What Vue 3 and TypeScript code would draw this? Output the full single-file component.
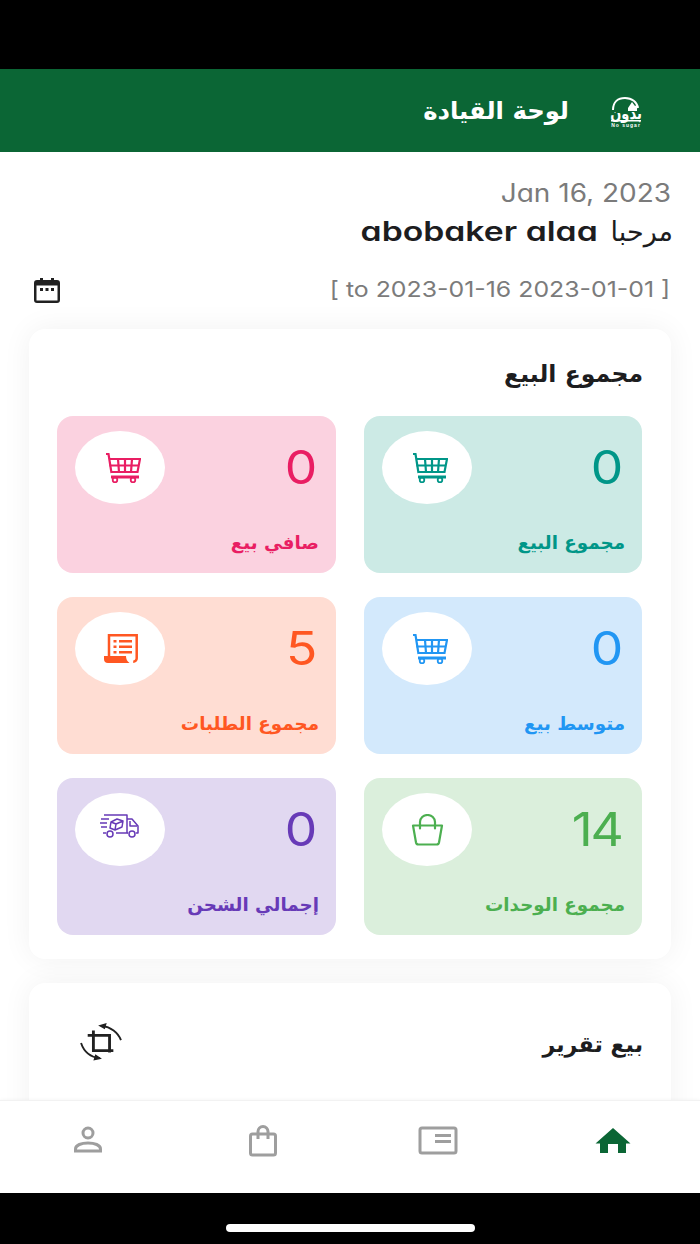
<script setup lang="ts">
interface Tile { label: string; value: string; color: string; bg: string; icon: string }
const tiles: Tile[] = [
  { label: 'مجموع البيع', value: '0', color: '#009688', bg: '#cceae5', icon: 'cart' },
  { label: 'صافي بيع', value: '0', color: '#e91e63', bg: '#fbd2e0', icon: 'cart' },
  { label: 'متوسط بيع', value: '0', color: '#2196f3', bg: '#d3e9fc', icon: 'cart' },
  { label: 'مجموع الطلبات', value: '5', color: '#ff5722', bg: '#ffddd3', icon: 'list' },
  { label: 'مجموع الوحدات', value: '14', color: '#4caf50', bg: '#dbefdc', icon: 'bag' },
  { label: 'إجمالي الشحن', value: '0', color: '#673ab7', bg: '#e1d8f1', icon: 'truck' },
]
</script>

<template>
  <div class="screen">
    <div class="status"></div>
    <header class="bar">
      <svg class="logo" viewBox="0 0 36 32" aria-hidden="true">
        <path d="M5 14C5 6 10 2 17 2s12 4 13 10" fill="none" stroke="#fff" stroke-width="2" />
        <path d="M20 12l4-6 3 4 2-1v6h-9z" fill="#fff" />
        <text transform="translate(18 23) scale(1 1.300)" text-anchor="middle" font-size="13" font-weight="700" fill="#fff" class="logo-ar">بدون</text>
        <rect x="3" y="24" width="30" height="1.500" fill="#fff" />
        <text x="18" y="31" text-anchor="middle" font-size="5" font-weight="700" letter-spacing="1" fill="#fff" class="logo-en">No sugar</text>
      </svg>
      <h1 class="bar-title">لوحة القيادة</h1>
    </header>

    <main class="content">
      <div class="date"><span class="wide-date">Jan 16, 2023</span></div>
      <div class="hello"><span class="hello-ar">مرحبا</span><span class="name">abobaker alaa</span></div>
      <div class="range-row">
        <svg class="cal" viewBox="0 0 28 28" aria-hidden="true">
          <path d="M7 3h3v2h8V3h3v2h3a3 3 0 0 1 3 3v17a3 3 0 0 1-3 3H4a3 3 0 0 1-3-3V8a3 3 0 0 1 3-3h3z" fill="#212121" />
          <rect x="3.500" y="10.500" width="21" height="15" fill="#fff" />
          <rect x="7" y="13" width="3" height="3" fill="#212121" />
          <rect x="12.500" y="13" width="3" height="3" fill="#212121" />
          <rect x="18" y="13" width="3" height="3" fill="#212121" />
        </svg>
        <span class="range">[ to 2023-01-16 2023-01-01 ]</span>
      </div>

      <section class="card summary">
        <h2 class="card-title">مجموع البيع</h2>
        <div class="grid">
          <div v-for="t in tiles" :key="t.label" class="tile" :style="{ background: t.bg, color: t.color }">
            <div class="tile-top">
              <span class="value">{{ t.value }}</span>
              <span class="disc">
                <svg v-if="t.icon === 'cart'" class="ico cart" viewBox="0 0 36 30" aria-hidden="true">
                  <g fill="none" stroke="currentColor">
                    <path d="M1 1l2.500 0 3 19" stroke-width="2.200" />
                    <path d="M4 6h31l-2.500 13H6.500" stroke-width="2.200" />
                    <path d="M4.500 12.500h29.500M13 6l1 13M20 6v13M27 6l-1 13" stroke-width="2.200" />
                    <path d="M6 24h28" stroke-width="3" />
                    <circle cx="10" cy="27" r="2.300" stroke-width="1.800" />
                    <circle cx="28" cy="27" r="2.300" stroke-width="1.800" />
                  </g>
                </svg>
                <svg v-else-if="t.icon === 'list'" class="ico list" viewBox="0 0 34 29" aria-hidden="true">
                  <path d="M5 23V1.300h27.700V24a3.500 3.500 0 0 1-3.500 3.700" fill="none" stroke="currentColor" stroke-width="2.500" />
                  <path d="M0 22h22c0 3 1 5 3.500 7H4a4 4 0 0 1-4-4z" fill="currentColor" />
                  <path d="M9.500 6h3v2.600h-3zM9.500 11.500h3v2.600h-3zM9.500 17h3v2.600h-3zM15 6h13v2.600H15zM15 11.500h13v2.600H15zM15 17h13v2.600H15z" fill="currentColor" />
                </svg>
                <svg v-else-if="t.icon === 'bag'" class="ico bag" viewBox="0 0 33 32" aria-hidden="true">
                  <g fill="none" stroke="currentColor" stroke-width="2.200">
                    <path d="M2 11.500h29l-3 17a2.500 2.500 0 0 1-2.500 2H7.500a2.500 2.500 0 0 1-2.500-2z" stroke-linejoin="round" />
                    <path d="M9 14.500V8a7.500 7 0 0 1 15 0v6.500" stroke-linecap="round" />
                  </g>
                </svg>
                <svg v-else class="ico truck" viewBox="0 0 40 24" aria-hidden="true">
                  <g fill="none" stroke="currentColor" stroke-width="1.500" stroke-linejoin="round">
                    <path d="M4 1h23v18H16M6 19H3" />
                    <path d="M27 5h5l6 7v7h-2M27 19h1" />
                    <path d="M30 7v5h7" />
                    <path d="M11 8l6-3 6 2-1 6-7 3-5-2z M11 8l5 2 7-3M16 10l-1 6" />
                    <path d="M1 5h8M0 9h7M1 13h6" />
                    <circle cx="10" cy="20" r="3" />
                    <circle cx="32" cy="20" r="3" />
                  </g>
                </svg>
              </span>
            </div>
            <div class="tile-label">{{ t.label }}</div>
          </div>
        </div>
      </section>

      <section class="card report">
        <h2 class="report-title">بيع تقرير</h2>
        <svg class="rotate" viewBox="0 0 46 40" aria-hidden="true">
          <g fill="none" stroke="#212121" stroke-width="3">
            <path d="M9 13h23v18" />
            <path d="M15 8v21h21" />
            <path d="M24 3c9 1 17 7 20 15" stroke-width="2" />
            <path d="M22 37C12 36 5 30 2 21" stroke-width="2" />
          </g>
          <path d="M20 2.500L29 0l-2 6.500zM24 37.500l-9 2 2-6.500z" fill="#212121" />
        </svg>
      </section>
    </main>

    <nav class="tabs">
      <svg class="tab" viewBox="0 0 32 32" aria-hidden="true">
        <g fill="none" stroke="#9e9e9e" stroke-width="3">
          <circle cx="16" cy="8" r="5" />
          <path d="M3.500 26v-2c0-4 6-6 12.500-6s12.500 2 12.500 6v2z" />
        </g>
      </svg>
      <svg class="tab" viewBox="0 0 32 32" aria-hidden="true">
        <g fill="none" stroke="#9e9e9e" stroke-width="3">
          <rect x="3.500" y="9" width="25" height="21" rx="2" />
          <path d="M11 14V6.500a5 5 0 0 1 10 0V14" />
        </g>
      </svg>
      <svg class="tab wide" viewBox="0 0 40 32" aria-hidden="true">
        <rect x="2" y="3" width="36" height="25" rx="2" fill="none" stroke="#9e9e9e" stroke-width="3" />
        <path d="M17 9h16v3H17zM17 15h16v3H17z" fill="#9e9e9e" />
      </svg>
      <svg class="tab home" viewBox="0 0 36 32" aria-hidden="true">
        <path d="M18 3L.5 18.500h4.500V28h8v-9h10v9h8v-9.500h4.500z" fill="#0b6635" />
      </svg>
    </nav>

    <footer class="home-area"><span class="indicator"></span></footer>
  </div>
</template>

<style>
html, body { margin: 0; background: #000; }
</style>

<style scoped>
.screen {
  width: 700px;
  height: 1244px;
  display: flex;
  flex-direction: column;
  background: #000;
  overflow: hidden;
  font-family: Inter, "DejaVu Sans", sans-serif;
  font-feature-settings: "cv11";
}
.status { height: 69px; flex: none; }
.bar {
  height: 83px;
  flex: none;
  box-sizing: border-box;
  background: #0b6635;
  display: flex;
  direction: rtl;
  align-items: center;
  padding-right: 56px;
  gap: 41px;
}
.logo { width: 36px; height: 32px; margin-top: 3px; overflow: visible; }
.logo-ar { font-family: "DejaVu Sans", sans-serif; }
.logo-en { font-family: "Liberation Sans", sans-serif; }
.bar-title {
  margin: 0 -2px 0 0;
  color: #fff;
  font-size: 24.300px;
  font-weight: 700;
  font-family: "DejaVu Sans", sans-serif;
}
.content {
  flex: 1;
  min-height: 0;
  overflow: hidden;
  background: #fff;
  padding: 24px 29px 0;
  display: flex;
  flex-direction: column;
}
.content > * { flex: none; }
.date { text-align: right; line-height: 34px; height: 34px; }
.wide-date {
  display: inline-block;
  font-size: 25px;
  color: #7b7b7b;
  transform: scaleX(1.12);
  transform-origin: right center;
}
.hello {
  display: flex;
  direction: rtl;
  gap: 13px;
  height: 44px;
  line-height: 44px;
  margin-right: -2px;
  color: #1d1d1f;
  white-space: nowrap;
}
.hello-ar { font-family: "DejaVu Sans", sans-serif; font-size: 27px; }
.name {
  font-size: 27px;
  font-weight: 600;
  direction: ltr;
  transform: scaleX(1.25);
  transform-origin: right center;
}
.range-row {
  display: flex;
  justify-content: space-between;
  align-items: center;
  margin-top: 20px;
  padding-left: 4px;
  height: 30px;
}
.cal { width: 28px; height: 28px; }
.range {
  font-size: 22px;
  color: #7b7b7b;
  white-space: nowrap;
  margin-right: 1px;
  transform: scaleX(1.13);
  transform-origin: right center;
}
.card {
  background: #fff;
  border-radius: 16px;
  box-sizing: border-box;
  box-shadow: 0 0 30px rgba(0, 0, 0, 0.06);
}
.summary { margin-top: 25px; height: 630px; padding: 24px 29px; }
.card-title {
  margin: 0 -1px 0 0;
  height: 63px;
  direction: rtl;
  font-size: 23.600px;
  line-height: 42px;
  font-weight: 700;
  color: #1d1d1f;
  font-family: "DejaVu Sans", sans-serif;
}
.grid {
  display: grid;
  direction: rtl;
  grid-template-columns: 278px 279px;
  grid-auto-rows: 157px;
  gap: 24px 28px;
}
.tile {
  border-radius: 16px;
  padding: 15px 20px 15px 18px;
  box-sizing: border-box;
  display: flex;
  flex-direction: column;
  justify-content: space-between;
}
.tile-top {
  display: flex;
  justify-content: space-between;
  align-items: center;
  height: 73px;
}
.value {
  font-size: 46px;
  line-height: 73px;
  letter-spacing: -2px;
  margin-right: 1px;
  direction: ltr;
  transform: scaleX(1.12);
  transform-origin: right center;
}
.disc {
  width: 90px;
  height: 73px;
  border-radius: 50%;
  background: #fff;
  display: flex;
  align-items: center;
  justify-content: center;
}
.ico { width: 36px; height: 30px; }
.ico.cart { margin-left: 6px; }
.ico.list { width: 34px; height: 29px; margin-left: 2px; }
.ico.bag { width: 33px; height: 32px; }
.ico.truck { width: 40px; height: 24px; margin-bottom: 7px; }
.tile-label {
  font-family: "DejaVu Sans", sans-serif;
  font-size: 18.300px;
  font-weight: 700;
  line-height: 30px;
  margin-right: -3px;
  white-space: nowrap;
}
.report {
  margin-top: 24px;
  height: 160px;
  display: flex;
  direction: rtl;
  justify-content: space-between;
  align-items: flex-start;
  padding: 39px 28px 0 50px;
}
.report-title {
  margin: 0;
  font-family: "DejaVu Sans", sans-serif;
  font-size: 22.200px;
  font-weight: 700;
  line-height: 44px;
  color: #1d1d1f;
}
.rotate { width: 44px; height: 38px; margin-top: 1px; }
.tabs {
  height: 93px;
  flex: none;
  box-sizing: border-box;
  background: #fff;
  border-top: 1px solid #f2f2f2;
  box-shadow: 0 -1px 3px rgba(0, 0, 0, 0.03);
  position: relative;
  display: grid;
  grid-template-columns: repeat(4, 175px);
  justify-items: center;
  padding-top: 24px;
}
.tab { width: 32px; height: 32px; }
.tab.wide { width: 40px; }
.tab.home { width: 36px; }
.home-area {
  height: 51px;
  flex: none;
  background: #000;
  display: flex;
  justify-content: center;
  padding-top: 31px;
  box-sizing: border-box;
}
.indicator { width: 249px; height: 8px; background: #fff; border-radius: 4px; }
</style>
